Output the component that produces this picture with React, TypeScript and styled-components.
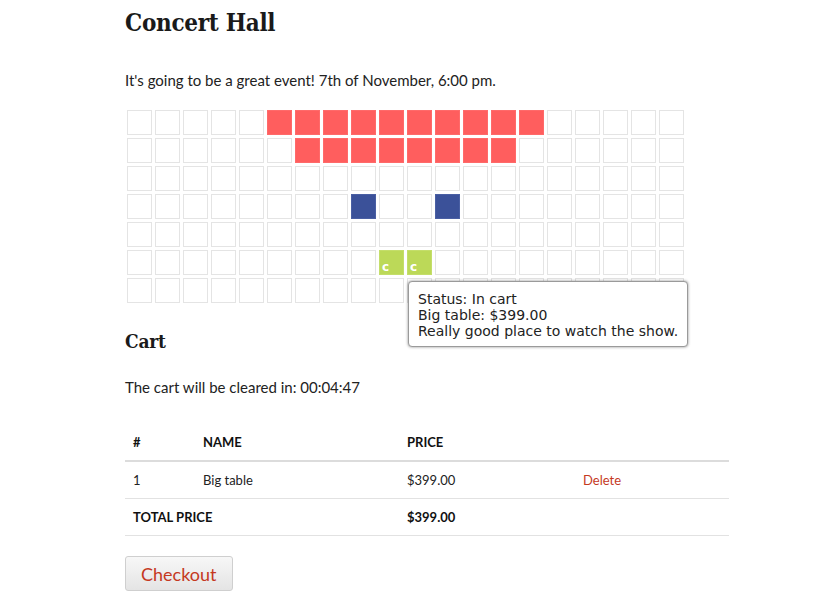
import React from "react";
import styled, { createGlobalStyle } from "styled-components";

const GlobalStyle = createGlobalStyle`
  html, body { margin: 0; padding: 0; background: #fff; }
  body { font-family: Lato, "Open Sans", sans-serif; color: #222; }
`;

const Page = styled.div`
  width: 604px;
  padding: 0 0 0 125px;
`;

const Title = styled.h1`
  font-family: "DejaVu Serif Condensed", "DejaVu Serif", serif;
  font-stretch: condensed;
  font-weight: bold;
  font-size: 24px;
  line-height: 30px;
  margin: 8px 0 0;
  color: #1a1a1a;
  letter-spacing: -0.3px;
`;

const Lead = styled.p`
  font-size: 15px;
  line-height: 20px;
  margin: 32px 0 0;
  color: #222;
`;

const HallWrap = styled.div`
  position: relative;
  margin-top: 20px;
`;

const SeatGrid = styled.div`
  display: grid;
  grid-template-columns: repeat(20, 25px);
  grid-auto-rows: 25px;
  gap: 3px;
  padding-left: 2px;
`;

type SeatKind = "free" | "sold" | "reserved" | "cart";

const seatColors: Record<SeatKind, string> = {
  free: "#ffffff",
  sold: "#ff5e5e",
  reserved: "#3b5199",
  cart: "#bcd958",
};

const seatBorders: Record<SeatKind, string> = {
  free: "#e4e4e4",
  sold: "#ff6a6a",
  reserved: "#4a5fa3",
  cart: "#c4de6a",
};

const Seat = styled.div<{ $kind: SeatKind }>`
  box-sizing: border-box;
  width: 25px;
  height: 25px;
  border: 1px solid ${(p) => seatBorders[p.$kind]};
  background: ${(p) => seatColors[p.$kind]};
  display: flex;
  align-items: flex-end;
  padding: 0 0 1px 2px;
  font-family: "DejaVu Sans", Verdana, sans-serif;
  font-size: 12px;
  font-weight: bold;
  line-height: 1;
  color: #fff;
`;

const Tooltip = styled.div`
  position: absolute;
  left: 283px;
  top: 171px;
  width: 280px;
  box-sizing: border-box;
  padding: 9px 9px 7px;
  background: #fff;
  border: 1px solid #9a9a9a;
  border-radius: 4px;
  box-shadow: 0 0 3px rgba(0, 0, 0, 0.45);
  font-family: "DejaVu Sans", Verdana, sans-serif;
  font-size: 14px;
  line-height: 16px;
  color: #222;
  white-space: nowrap;
`;

const SubTitle = styled.h2`
  font-family: "DejaVu Serif Condensed", "DejaVu Serif", serif;
  font-stretch: condensed;
  font-weight: bold;
  font-size: 19px;
  line-height: 24px;
  margin: 26px 0 0;
  color: #1a1a1a;
  letter-spacing: -0.2px;
`;

const Timer = styled.p`
  font-size: 15px;
  line-height: 20px;
  margin: 24px 0 0;
`;

const Table = styled.table`
  width: 604px;
  border-collapse: collapse;
  margin-top: 27px;
  font-size: 13px;
  color: #222;
`;

const HeadCell = styled.th`
  text-align: left;
  font-size: 13px;
  font-weight: bold;
  text-transform: uppercase;
  padding: 8px 8px;
  line-height: 20px;
  border-bottom: 2px solid #dcdcdc;
  color: #111;
`;

const Cell = styled.td<{ $bold?: boolean }>`
  padding: 8px 8px;
  line-height: 20px;
  border-bottom: 1px solid #e2e2e2;
  font-weight: ${(p) => (p.$bold ? "bold" : "normal")};
  font-size: 13px;
  text-transform: ${(p) => (p.$bold ? "uppercase" : "none")};
  color: ${(p) => (p.$bold ? "#111" : "#222")};
`;

const DeleteLink = styled.a`
  color: #c5391f;
  text-decoration: none;
  cursor: pointer;
`;

const CheckoutButton = styled.button`
  margin-top: 20px;
  height: 35px;
  padding: 0 15px;
  font-family: Lato, "Open Sans", sans-serif;
  font-size: 18px;
  color: #c5391f;
  background: linear-gradient(#f7f7f7, #e4e4e4);
  border: 1px solid #cfcfcf;
  border-radius: 3px;
  cursor: pointer;
`;

const ROWS = 7;
const COLS = 20;

function seatKind(r: number, c: number): SeatKind {
  if (r === 0 && c >= 5 && c <= 14) return "sold";
  if (r === 1 && c >= 6 && c <= 13) return "sold";
  if (r === 3 && (c === 8 || c === 11)) return "reserved";
  if (r === 5 && (c === 9 || c === 10)) return "cart";
  return "free";
}

export default function App() {
  const seats: React.ReactNode[] = [];
  for (let r = 0; r < ROWS; r++) {
    for (let c = 0; c < COLS; c++) {
      const kind = seatKind(r, c);
      seats.push(
        <Seat key={`${r}-${c}`} $kind={kind}>
          {kind === "cart" ? "c" : null}
        </Seat>
      );
    }
  }

  return (
    <>
      <GlobalStyle />
      <Page>
        <Title>Concert Hall</Title>
        <Lead>It's going to be a great event! 7th of November, 6:00 pm.</Lead>
        <HallWrap>
          <SeatGrid>{seats}</SeatGrid>
          <Tooltip>
            Status: In cart
            <br />
            Big table: $399.00
            <br />
            Really good place to watch the show.
          </Tooltip>
        </HallWrap>
        <SubTitle>Cart</SubTitle>
        <Timer>The cart will be cleared in: 00:04:47</Timer>
        <Table>
          <colgroup>
            <col style={{ width: 70 }} />
            <col style={{ width: 204 }} />
            <col style={{ width: 176 }} />
            <col style={{ width: 154 }} />
          </colgroup>
          <thead>
            <tr>
              <HeadCell>#</HeadCell>
              <HeadCell>Name</HeadCell>
              <HeadCell>Price</HeadCell>
              <HeadCell></HeadCell>
            </tr>
          </thead>
          <tbody>
            <tr>
              <Cell>1</Cell>
              <Cell>Big table</Cell>
              <Cell>$399.00</Cell>
              <Cell>
                <DeleteLink>Delete</DeleteLink>
              </Cell>
            </tr>
            <tr>
              <Cell $bold colSpan={2}>
                Total price
              </Cell>
              <Cell $bold>$399.00</Cell>
              <Cell></Cell>
            </tr>
          </tbody>
        </Table>
        <CheckoutButton>Checkout</CheckoutButton>
      </Page>
    </>
  );
}
